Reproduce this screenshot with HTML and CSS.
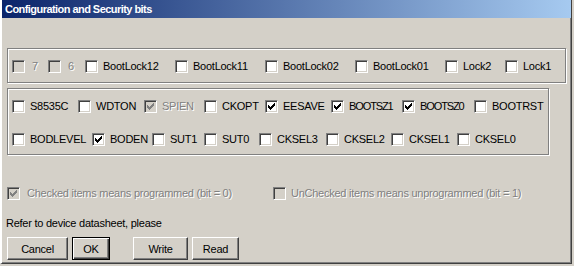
FILE: index.html
```html
<!DOCTYPE html>
<html>
<head>
<meta charset="utf-8">
<title>Configuration and Security bits</title>
<link rel="stylesheet" href="styles.css">
</head>
<body>
<div class="window">
  <div class="titlebar"><span class="title">Configuration and Security bits</span></div>
  <div class="client">
    <div class="group g1">
      <div class="row r1">
        <div class="cb dis num"><span class="box"></span><span class="lbl">7</span></div>
        <div class="cb dis num"><span class="box"></span><span class="lbl">6</span></div>
        <div class="cb"><span class="box"></span><span class="lbl">BootLock12</span></div>
        <div class="cb"><span class="box"></span><span class="lbl">BootLock11</span></div>
        <div class="cb"><span class="box"></span><span class="lbl">BootLock02</span></div>
        <div class="cb"><span class="box"></span><span class="lbl">BootLock01</span></div>
        <div class="cb"><span class="box"></span><span class="lbl">Lock2</span></div>
        <div class="cb"><span class="box"></span><span class="lbl">Lock1</span></div>
      </div>
    </div>
    <div class="group g2">
      <div class="row r2">
        <div class="cb"><span class="box"></span><span class="lbl">S8535C</span></div>
        <div class="cb"><span class="box"></span><span class="lbl">WDTON</span></div>
        <div class="cb dis"><span class="box"><svg class="chk" viewBox="0 0 7 7" width="7" height="7"><path d="M6 0h1v1h-1z M5 1h2v1h-2z M0 2h1v1h-1z M4 2h3v1h-3z M0 3h2v1h-2z M3 3h3v1h-3z M0 4h5v1h-5z M1 5h3v1h-3z M2 6h1v1h-1z"/></svg></span><span class="lbl">SPIEN</span></div>
        <div class="cb"><span class="box"></span><span class="lbl">CKOPT</span></div>
        <div class="cb"><span class="box"><svg class="chk" viewBox="0 0 7 7" width="7" height="7"><path d="M6 0h1v1h-1z M5 1h2v1h-2z M0 2h1v1h-1z M4 2h3v1h-3z M0 3h2v1h-2z M3 3h3v1h-3z M0 4h5v1h-5z M1 5h3v1h-3z M2 6h1v1h-1z"/></svg></span><span class="lbl">EESAVE</span></div>
        <div class="cb tight"><span class="box"><svg class="chk" viewBox="0 0 7 7" width="7" height="7"><path d="M6 0h1v1h-1z M5 1h2v1h-2z M0 2h1v1h-1z M4 2h3v1h-3z M0 3h2v1h-2z M3 3h3v1h-3z M0 4h5v1h-5z M1 5h3v1h-3z M2 6h1v1h-1z"/></svg></span><span class="lbl">BOOTSZ1</span></div>
        <div class="cb tight"><span class="box"><svg class="chk" viewBox="0 0 7 7" width="7" height="7"><path d="M6 0h1v1h-1z M5 1h2v1h-2z M0 2h1v1h-1z M4 2h3v1h-3z M0 3h2v1h-2z M3 3h3v1h-3z M0 4h5v1h-5z M1 5h3v1h-3z M2 6h1v1h-1z"/></svg></span><span class="lbl">BOOTSZ0</span></div>
        <div class="cb"><span class="box"></span><span class="lbl">BOOTRST</span></div>
      </div>
      <div class="row r3">
        <div class="cb"><span class="box"></span><span class="lbl">BODLEVEL</span></div>
        <div class="cb"><span class="box"><svg class="chk" viewBox="0 0 7 7" width="7" height="7"><path d="M6 0h1v1h-1z M5 1h2v1h-2z M0 2h1v1h-1z M4 2h3v1h-3z M0 3h2v1h-2z M3 3h3v1h-3z M0 4h5v1h-5z M1 5h3v1h-3z M2 6h1v1h-1z"/></svg></span><span class="lbl">BODEN</span></div>
        <div class="cb"><span class="box"></span><span class="lbl">SUT1</span></div>
        <div class="cb"><span class="box"></span><span class="lbl">SUT0</span></div>
        <div class="cb"><span class="box"></span><span class="lbl">CKSEL3</span></div>
        <div class="cb"><span class="box"></span><span class="lbl">CKSEL2</span></div>
        <div class="cb"><span class="box"></span><span class="lbl">CKSEL1</span></div>
        <div class="cb"><span class="box"></span><span class="lbl">CKSEL0</span></div>
      </div>
    </div>
    <div class="row legend">
      <div class="cb dis wide"><span class="box"><svg class="chk" viewBox="0 0 7 7" width="7" height="7"><path d="M6 0h1v1h-1z M5 1h2v1h-2z M0 2h1v1h-1z M4 2h3v1h-3z M0 3h2v1h-2z M3 3h3v1h-3z M0 4h5v1h-5z M1 5h3v1h-3z M2 6h1v1h-1z"/></svg></span><span class="lbl">Checked items means programmed (bit = 0)</span></div>
      <div class="cb dis"><span class="box"></span><span class="lbl">UnChecked items means unprogrammed (bit = 1)</span></div>
    </div>
    <div class="note">Refer to device datasheet, please</div>
    <div class="buttons">
      <button class="btn b-cancel">Cancel</button>
      <button class="btn b-ok">OK</button>
      <button class="btn b-write">Write</button>
      <button class="btn b-read">Read</button>
    </div>
  </div>
</div>
</body>
</html>
```

FILE: styles.css
```css
html, body {
  margin: 0;
  padding: 0;
  background: #d4d0c8;
}

body {
  font-family: "Liberation Sans", Arial, sans-serif;
  font-size: 11px;
  letter-spacing: -0.25px;
  color: #000;
}

.window {
  width: 572px;
  height: 264px;
  box-sizing: border-box;
  background: #d4d0c8;
  border-left: 2px solid #ffffff;
  border-right: 1px solid #404040;
  border-bottom: 1px solid #404040;
  box-shadow: inset -1px -1px 0 #808080;
  display: flex;
  flex-direction: column;
}

.titlebar {
  height: 18px;
  background: linear-gradient(to right, #0a246a, #a6caf0);
  display: flex;
  align-items: center;
  padding-left: 3px;
}

.title {
  color: #fff;
  font-weight: bold;
  font-size: 11px;
  letter-spacing: -0.55px;
  line-height: 18px;
}

.client {
  padding: 30px 0 0 5px;
  display: flex;
  flex-direction: column;
}

.group {
  box-sizing: border-box;
  border: 1px solid #808080;
  box-shadow: inset 1px 1px 0 #ffffff, 1px 1px 0 #ffffff;
  padding: 11px 0 0 4px;
}

.g1 {
  width: 559px;
  height: 35px;
}

.g2 {
  width: 542px;
  height: 67px;
  margin-top: 5px;
}

.row {
  display: grid;
  height: 13px;
  align-items: center;
}

.r1 { grid-template-columns: 36px 37px 90px 90px 90px 90px 60px auto; }
.r2 { grid-template-columns: 66px 66px 60px 61px 66px 71px 72px auto; }
.r3 { grid-template-columns: 80px 60px 52px 55px 67px 65px 66px auto; margin-top: 20px; }

.legend {
  grid-template-columns: 266px auto;
  margin-top: 32px;
}

.cb {
  display: flex;
  align-items: center;
  gap: 5px;
  white-space: nowrap;
}

.num { gap: 7px; }
.wide { gap: 7px; }
.tight .lbl { letter-spacing: -1.1px; }

.box {
  width: 13px;
  height: 13px;
  box-sizing: border-box;
  flex: none;
  background: #fff;
  border: 1px solid;
  border-color: #808080 #ffffff #ffffff #808080;
  box-shadow: inset 1px 1px 0 #404040, inset -1px -1px 0 #d4d0c8;
}

.chk {
  display: block;
  margin: 2px;
  fill: #000;
}

.lbl {
  line-height: 13px;
}

.dis .box {
  background: #d4d0c8;
}

.dis .chk {
  fill: #808080;
}

.dis .lbl {
  color: #808080;
  text-shadow: 1px 1px 0 #ffffff;
}

.note {
  margin-top: 17px;
  margin-left: -1px;
  line-height: 13px;
}

.buttons {
  display: flex;
  margin-top: 7px;
}

.btn {
  height: 23px;
  box-sizing: border-box;
  padding: 0;
  margin: 0;
  font-family: "Liberation Sans", Arial, sans-serif;
  font-size: 11px;
  letter-spacing: -0.25px;
  color: #000;
  background: #d4d0c8;
  border: 1px solid;
  border-color: #ffffff #404040 #404040 #ffffff;
  box-shadow: inset -1px -1px 0 #808080;
}

.b-cancel { width: 61px; }
.b-ok {
  width: 38px;
  margin-left: 4px;
  border: 1px solid #000;
  box-shadow: inset 1px 1px 0 #ffffff, inset -1px -1px 0 #404040, inset -2px -2px 0 #808080;
}
.b-write { width: 55px; margin-left: 23px; }
.b-read { width: 47px; margin-left: 4px; }
```
